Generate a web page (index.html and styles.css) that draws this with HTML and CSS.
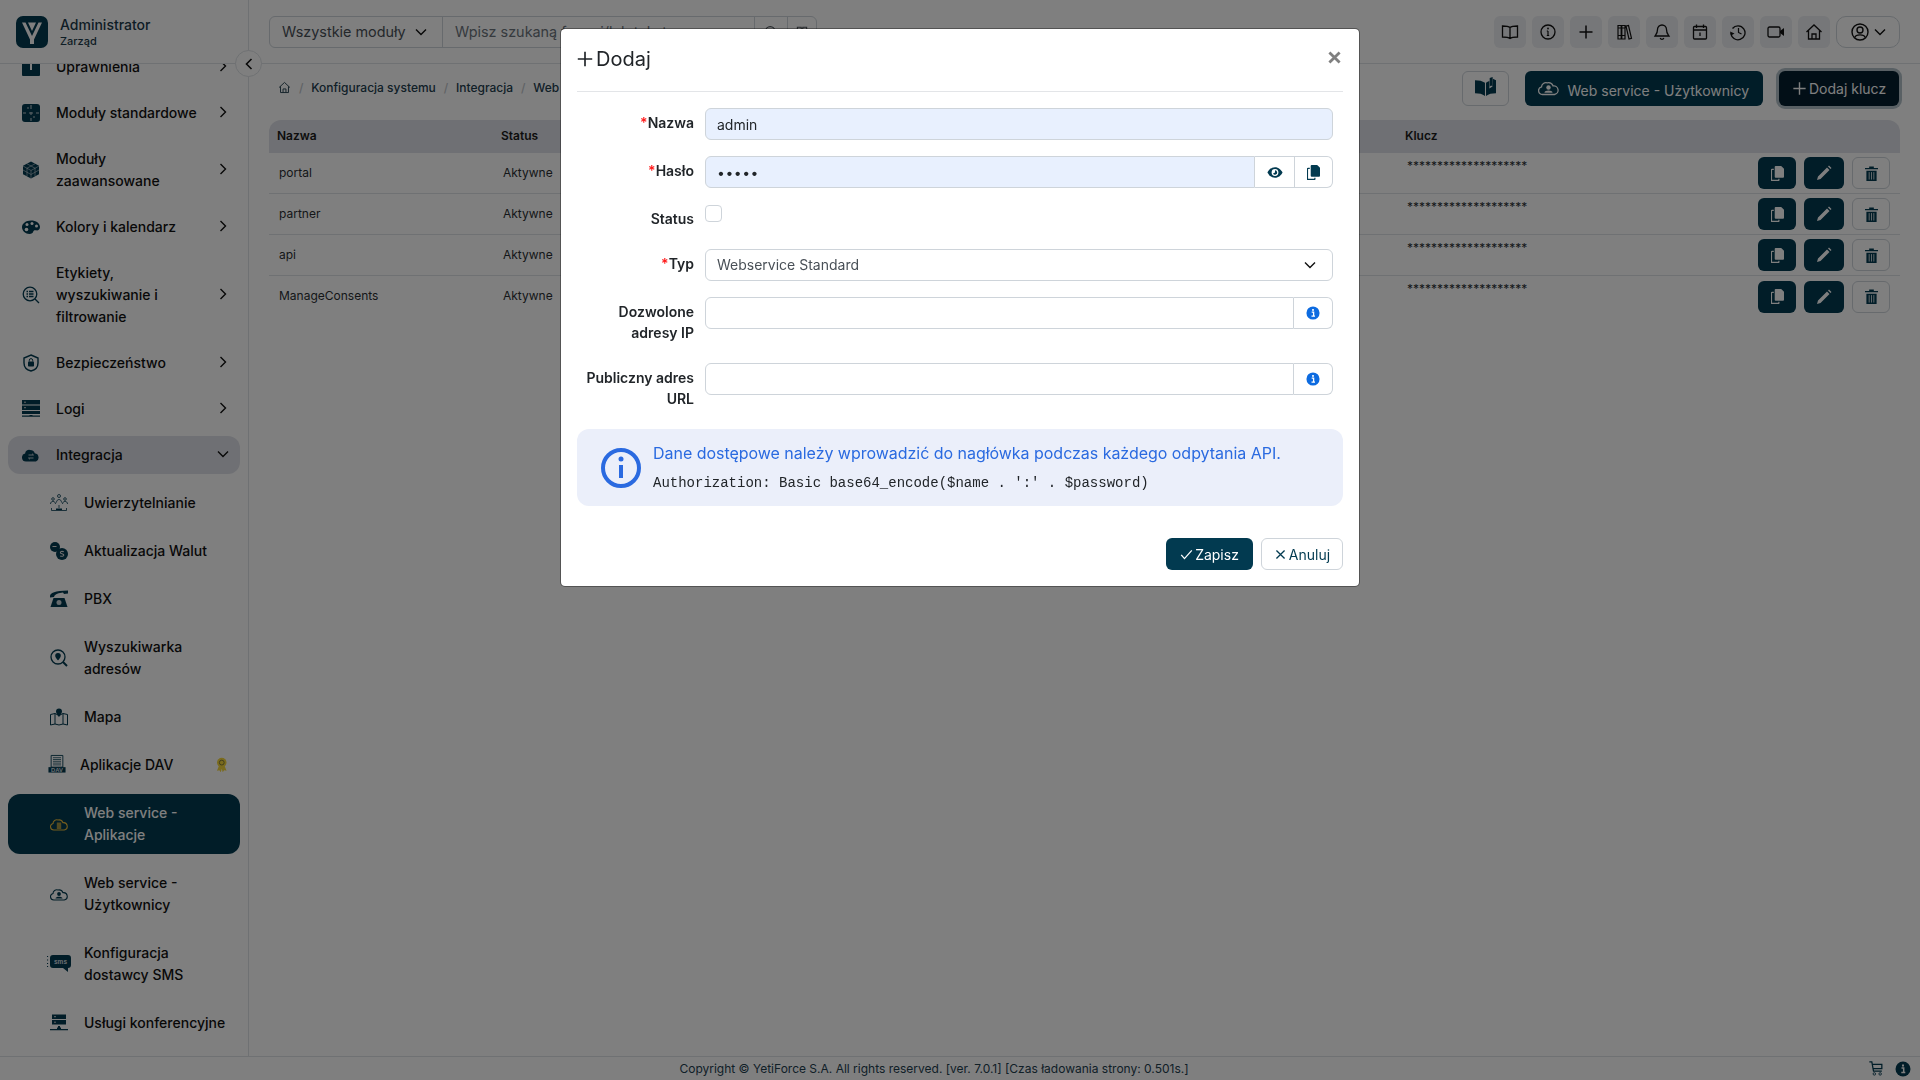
FILE: index.html
```html
<!DOCTYPE html>
<html lang="pl">
<head>
<title>Web service - Aplikacje</title>
<meta charset="utf-8">
<link rel="stylesheet" href="styles.css">
</head>
<body>

<svg class="sprite" xmlns="http://www.w3.org/2000/svg">
  <symbol id="i-chev-right" viewBox="0 0 12 12"><path d="M3.500 1l5 5-5 5" fill="none" stroke="currentColor" stroke-width="1.400"/></symbol>
  <symbol id="i-chev-down" viewBox="0 0 12 12"><path d="M1 3.500l5 5 5-5" fill="none" stroke="currentColor" stroke-width="1.400"/></symbol>
  <symbol id="i-chev-left" viewBox="0 0 12 12"><path d="M8.500 1l-5 5 5 5" fill="none" stroke="currentColor" stroke-width="1.600"/></symbol>
  <symbol id="i-perm" viewBox="0 0 18 18"><rect y="0" width="18" height="18" rx="1" fill="currentColor"/><path d="M8 6h2v6H8z" fill="#fff"/></symbol>
  <symbol id="i-puzzle" viewBox="0 0 18 18"><rect width="18" height="18" rx="3" fill="currentColor"/><path d="M9 1v4M9 8v3M9 14v3M1 9h3M7 9h4M14 9h3M5 4h2M11 13h2" stroke="#b9c6cd" stroke-width="1.100" fill="none"/></symbol>
  <symbol id="i-cube" viewBox="0 0 18 18"><path d="M9 .5l8 4.300v8.400l-8 4.300-8-4.300V4.800z" fill="currentColor"/><path d="M1 5l8 4.500L17 5M9 9.500V17M5 2.800l8 4.400M13 2.800L5 7.200M1 9l8 4.500L17 9M5 7v8M13 7v8" stroke="#c9d3d8" stroke-width=".6" fill="none"/></symbol>
  <symbol id="i-palette" viewBox="0 0 18 18"><path d="M9 2.500c5 0 9 2.700 9 6.500 0 2.500-2 3.800-4 3.300-1.700-.4-2.600.3-2.700 1.300C11 15.300 9.500 16 7.500 16 3.500 16 0 13 0 9.300 0 5.300 4 2.500 9 2.500z" fill="currentColor"/><circle cx="5" cy="6.500" r="1.500" fill="#fff"/><circle cx="10" cy="5.500" r="1.500" fill="#fff"/><circle cx="14.500" cy="8" r="1.500" fill="#fff"/><circle cx="4.500" cy="11.500" r="1.800" fill="#fff"/></symbol>
  <symbol id="i-search-list" viewBox="0 0 18 18"><circle cx="8" cy="8" r="6.800" fill="none" stroke="currentColor" stroke-width="1.300"/><path d="M4.500 5.500h1.500M7 5.500h4.500M4.500 8h1.500M7 8h4.500M4.500 10.500h1.500M7 10.500h4.500M13 13l4 4" stroke="currentColor" stroke-width="1.300" fill="none"/></symbol>
  <symbol id="i-shield" viewBox="0 0 18 18"><path d="M9 1l7 3v5c0 4-3 7-7 8-4-1-7-4-7-8V4z" fill="none" stroke="currentColor" stroke-width="1.400"/><rect x="6" y="7.500" width="6" height="5" rx=".8" fill="currentColor"/><path d="M7.300 7.500V6.300a1.700 1.700 0 013.400 0v1.200" fill="none" stroke="currentColor"/></symbol>
  <symbol id="i-logs" viewBox="0 0 18 18"><path d="M0 0h18v4.500H0zM0 5.500h18V10H0zM0 11h18v3H0zM0 15.500h7.500V15h3v.5H18v1.200H0z" fill="currentColor"/><path d="M2 2.200h2M2 7.700h2" stroke="#ccc" fill="none"/></symbol>
  <symbol id="i-cloud-sync" viewBox="0 0 18 18"><path d="M4 15.500a4 4 0 01-.9-7.900 4 4 0 015-3.600 5 5 0 014.700 3.300A4.300 4.300 0 0114 15.500z" fill="currentColor"/><path d="M6.500 9h5l-1.500-1.300M11.500 12h-5L8 13.300" stroke="#b9c6cd" fill="none"/></symbol>
  <symbol id="i-auth" viewBox="0 0 18 18"><g fill="none" stroke="currentColor" stroke-width=".8"><circle cx="9" cy="2" r="1.500"/><path d="M6.500 8.500c0-4 5-4 5 0"/><circle cx="3" cy="5" r="1.300"/><path d="M.5 10c0-3.500 5-3.500 5 0"/><circle cx="15" cy="5" r="1.300"/><path d="M12.500 10c0-3.500 5-3.500 5 0"/><path d="M1.500 14v2.500h15V14M9 11v3"/></g><path d="M6 14.500h6v1.500H6z" fill="currentColor"/></symbol>
  <symbol id="i-currency" viewBox="0 0 18 18"><circle cx="5" cy="5" r="5" fill="currentColor"/><circle cx="12" cy="12" r="6" fill="currentColor"/><path d="M2.500 4.500h4M13.800 9.800c-2-.9-3.600-.2-3.400 1 .2 1.200 3.400.8 3.400 2.300 0 1.200-1.800 1.600-3.600.8" stroke="#ddd" stroke-width="1.100" fill="none"/></symbol>
  <symbol id="i-phone" viewBox="0 0 18 18"><path d="M0 6.500C0 2.500 5 1 18 .5v3l-4 .5-1-1.500C9 3 5 3.500 4 7L0 7.500z" fill="currentColor"/><path d="M3.500 8h11l3 9H.5z" fill="currentColor"/><circle cx="9" cy="12.500" r="2.500" fill="#cbd5da"/></symbol>
  <symbol id="i-search-pin" viewBox="0 0 18 18"><circle cx="8" cy="8" r="7" fill="none" stroke="currentColor" stroke-width="1.300"/><path d="M8 4a2.800 2.800 0 012.800 2.800C10.800 8.600 8 11.500 8 11.500S5.200 8.600 5.200 6.800A2.800 2.800 0 018 4z" fill="currentColor"/><path d="M13 13l4 4" stroke="currentColor" stroke-width="2"/></symbol>
  <symbol id="i-map" viewBox="0 0 18 18"><path d="M.5 6.500L5 5.500l4 2 4-2 4.500 1V17L13 16l-4 1-4-1-4.500 1zM5 5.500V16M13 5.500V16" fill="none" stroke="currentColor"/><path d="M9 .5a3 3 0 013 3C12 5.500 9 9 9 9S6 5.500 6 3.500a3 3 0 013-3z" fill="currentColor"/></symbol>
  <symbol id="i-dav" viewBox="0 0 20 20"><path d="M3.500.500h13v13h-13z" fill="none" stroke="currentColor"/><path d="M5.500 3h9M5.500 5h9M5.500 7h9M5.500 9h9M5.500 11h9" stroke="currentColor" stroke-width=".8"/><rect x=".5" y="13.500" width="19" height="6" fill="currentColor"/><text x="10" y="18.500" class="icon-text" text-anchor="middle">DAV</text></symbol>
  <symbol id="i-cloud-doc" viewBox="0 0 18 18"><path d="M3.800 15A3.300 3.300 0 013 8.500a3.800 3.800 0 015-3.500 4.500 4.500 0 015 2.700A3.700 3.700 0 0114.200 15z" fill="none" stroke="currentColor" stroke-width="1.100"/><path d="M6.800 7.500h4.400v6.500H6.800z" fill="currentColor" opacity=".7"/></symbol>
  <symbol id="i-cloud-user" viewBox="0 0 18 18"><path d="M3.800 15A3.300 3.300 0 013 8.500a3.800 3.800 0 015-3.500 4.500 4.500 0 015 2.700A3.700 3.700 0 0114.200 15z" fill="none" stroke="currentColor" stroke-width="1.100"/><circle cx="9" cy="9" r="1.900" fill="currentColor"/><path d="M5.500 13.500c0-2.500 7-2.500 7 0z" fill="currentColor"/></symbol>
  <symbol id="i-sms" viewBox="0 0 24 20"><path d="M6 2h15a3 3 0 013 3v7a3 3 0 01-3 3v4l-5-4H6a3 3 0 01-3-3V5a3 3 0 013-3z" fill="currentColor" transform="translate(0 -1)"/><text x="13.500" y="10" class="icon-text" text-anchor="middle">sms</text><path d="M.5 2v1M.5 5.500v1M.5 9v1M.5 12v1" stroke="currentColor" stroke-width="1.200"/></symbol>
  <symbol id="i-server" viewBox="0 0 18 18"><path d="M2 .5h14v4.500H2zM2 6h14v4.500H2zM0 15h7v-1.500H8V12h2v1.500h1V15h7v1.300H0z" fill="currentColor"/><path d="M4 2.700h2M4 8.200h2" stroke="#ccc" fill="none"/></symbol>
  <symbol id="i-award" viewBox="0 0 12 16"><path d="M3 9l-2 5 2.500-.5L5 15.500 6 12l1 3.500 1.500-2L11 14 9 9z" fill="currentColor"/><circle cx="6" cy="5.500" r="5" fill="currentColor"/><circle cx="6" cy="5.500" r="2.500" fill="none" stroke="#7f7a3a"/></symbol>

  <symbol id="i-book" viewBox="0 0 18 18"><path d="M9 4.500C7.500 3.200 5 3 1.500 3v11C5 14 7.500 14.200 9 15.500 10.500 14.200 13 14 16.500 14V3C13 3 10.500 3.200 9 4.500zM9 4.500v11" fill="none" stroke="currentColor" stroke-width="1.300"/></symbol>
  <symbol id="i-info-line" viewBox="0 0 18 18"><circle cx="9" cy="9" r="7" fill="none" stroke="currentColor" stroke-width="1.300"/><path d="M9 8v4.500M7.800 8H9M7.800 12.500h2.400" stroke="currentColor" stroke-width="1.200" fill="none"/><circle cx="9" cy="5.500" r=".9" fill="currentColor"/></symbol>
  <symbol id="i-plus" viewBox="0 0 18 18"><path d="M9 2.500v13M2.500 9h13" stroke="currentColor" stroke-width="1.500" fill="none"/></symbol>
  <symbol id="i-books" viewBox="0 0 18 18"><path d="M3 2.500h3.200v13.500H3zM6.800 2.500H10v13.500H6.800zM11 3.200l2.500-.7 3 12.800-2.500.7z" fill="none" stroke="currentColor" stroke-width="1.200"/><path d="M3 5h7M3 12.500h7" stroke="currentColor" stroke-width="1.200" fill="none"/></symbol>
  <symbol id="i-bell" viewBox="0 0 18 18"><path d="M9 2a4.500 4.500 0 014.500 4.500c0 4 1.500 5 2.500 6.500H2c1-1.500 2.500-2.500 2.500-6.500A4.500 4.500 0 019 2zM7.200 15a1.900 1.900 0 003.600 0" fill="none" stroke="currentColor" stroke-width="1.300"/></symbol>
  <symbol id="i-calendar" viewBox="0 0 18 18"><rect x="2.500" y="3.500" width="13" height="12.500" rx="1" fill="none" stroke="currentColor" stroke-width="1.300"/><path d="M2.500 7h13M5.500 1.500v3.500M12.500 1.500v3.500M9 9.500v3.500" stroke="currentColor" stroke-width="1.300" fill="none"/></symbol>
  <symbol id="i-history" viewBox="0 0 18 18"><path d="M3.500 5.500A7 7 0 112 10" fill="none" stroke="currentColor" stroke-width="1.300"/><path d="M1 8.500l1 4 3.500-2z" fill="currentColor"/><path d="M9.500 5v4.500l3 1.500" fill="none" stroke="currentColor" stroke-width="1.200"/></symbol>
  <symbol id="i-video" viewBox="0 0 18 18"><rect x="1" y="4" width="12" height="10" rx="1.500" fill="none" stroke="currentColor" stroke-width="1.300"/><path d="M13 8l4-3v8l-4-3z" fill="currentColor"/></symbol>
  <symbol id="i-home" viewBox="0 0 18 18"><path d="M1.500 9L9 2l7.500 7M3.500 7.500V16h11V7.500M7 16v-5h4v5" fill="none" stroke="currentColor" stroke-width="1.300"/></symbol>
  <symbol id="i-user" viewBox="0 0 18 18"><circle cx="9" cy="9" r="8" fill="none" stroke="currentColor" stroke-width="1.400"/><circle cx="9" cy="7" r="3" fill="none" stroke="currentColor" stroke-width="1.400"/><path d="M3.800 14.500c1-3.500 9.400-3.500 10.400 0" fill="none" stroke="currentColor" stroke-width="1.400"/></symbol>
  <symbol id="i-reader" viewBox="0 0 20 18"><path d="M0 3c4 0 7 .7 9.500 2.500V18C7 16.200 4 15.500 0 15.500z" fill="currentColor"/><path d="M20 3v12.500c-4 0-7 .7-9.500 2.500V5.500c1-.7 2-1.300 3.200-1.700V11l3-2 .3-7.500" fill="currentColor"/><path d="M14 1l2.800-1v9l-1.400-1-1.400 1z" fill="currentColor"/></symbol>
  <symbol id="i-copy" viewBox="0 0 14 16"><path d="M5 0h6l3 3v8.500a1 1 0 01-1 1H5a1 1 0 01-1-1V1a1 1 0 011-1z" fill="currentColor"/><path d="M3 3.500H1a.5.5 0 00-.5.5v11a.5.5 0 00.5.5h7a.5.5 0 00.5-.5v-1.300" fill="none" stroke="currentColor" stroke-width="1.300"/></symbol>
  <symbol id="i-pencil" viewBox="0 0 16 16"><path d="M1 15l1-3.500L11 2.500 13.500 5l-9 9zM12 1.500l1-1L15.500 3l-1 1z" fill="currentColor"/></symbol>
  <symbol id="i-trash" viewBox="0 0 14 16"><path d="M0 2h4.500V.5h5V2H14v1.500H0zM1.500 5H12.500V16H1.500z" fill="currentColor"/><path d="M4.500 6.500V14.500M7 6.500V14.500M9.500 6.500V14.500" stroke="#cfd8dc" fill="none"/></symbol>
  <symbol id="i-eye" viewBox="0 0 18 14"><path d="M9 1c4 0 7 3 8.500 6-1.500 3-4.500 6-8.500 6S2 10 .5 7C2 4 5 1 9 1z" fill="currentColor"/><circle cx="9" cy="7" r="3.800" fill="#fff"/><path d="M9 4.500A2.500 2.500 0 116.800 8.200 L9 7z" fill="currentColor"/></symbol>
  <symbol id="i-info-solid" viewBox="0 0 16 16"><circle cx="8" cy="8" r="7.500" fill="currentColor"/><path d="M6.500 7h2.200v4M6.300 11.500h4" stroke="#fff" stroke-width="1.500" fill="none"/><rect x="7" y="3.500" width="2" height="2" fill="#fff"/></symbol>
  <symbol id="i-check" viewBox="0 0 16 16"><path d="M1.500 8.500l4 4.500 9-10" fill="none" stroke="currentColor" stroke-width="1.600"/></symbol>
  <symbol id="i-cross" viewBox="0 0 16 16"><path d="M3 3l10 10M13 3L3 13" fill="none" stroke="currentColor" stroke-width="1.600"/></symbol>
  <symbol id="i-close" viewBox="0 0 14 14"><path d="M1.500 1.500l11 11M12.500 1.500l-11 11" fill="none" stroke="currentColor" stroke-width="3"/></symbol>
  <symbol id="i-cart" viewBox="0 0 16 18"><path d="M0 1h3l2 11h10M4 4h11v5H5" fill="none" stroke="currentColor" stroke-width="1.500"/><circle cx="6" cy="15.500" r="1.500" fill="none" stroke="currentColor"/><circle cx="13" cy="15.500" r="1.500" fill="none" stroke="currentColor"/></symbol>
  <symbol id="i-search" viewBox="0 0 18 18"><circle cx="8" cy="8" r="6" fill="none" stroke="currentColor" stroke-width="1.500"/><path d="M12.500 12.500l4 4" stroke="currentColor" stroke-width="1.500"/></symbol>
  <symbol id="i-grid" viewBox="0 0 18 18"><path d="M3 3h5v5H3zM10 3h5v5h-5zM3 10h5v5H3zM10 10h5v5h-5z" fill="none" stroke="currentColor" stroke-width="1.300"/></symbol>
  <symbol id="i-logo" viewBox="0 0 32 32"><rect width="32" height="32" rx="7" fill="currentColor"/><path d="M6 6.500h3.500L16 20l6.500-13.500H26l-8 17V28h-4v-4.500zM12 6.500h8l-4 8.500z" fill="#fff"/></symbol>
</svg>

<div class="layout">
  <aside class="sidebar">
    <div class="side-head">
      <svg class="logo"><use href="#i-logo"/></svg>
      <div class="side-user">
        <div class="side-name">Administrator</div>
        <div class="side-role">Zarząd</div>
      </div>
    </div>
    <nav class="nav">
      <ul class="nav-list">
        <li class="nav-item"><svg class="nav-icon"><use href="#i-perm"/></svg><span class="nav-label">Uprawnienia</span><svg class="chev"><use href="#i-chev-right"/></svg></li>
        <li class="nav-item"><svg class="nav-icon"><use href="#i-puzzle"/></svg><span class="nav-label">Moduły standardowe</span><svg class="chev"><use href="#i-chev-right"/></svg></li>
        <li class="nav-item"><svg class="nav-icon"><use href="#i-cube"/></svg><span class="nav-label">Moduły zaawansowane</span><svg class="chev"><use href="#i-chev-right"/></svg></li>
        <li class="nav-item"><svg class="nav-icon"><use href="#i-palette"/></svg><span class="nav-label">Kolory i kalendarz</span><svg class="chev"><use href="#i-chev-right"/></svg></li>
        <li class="nav-item"><svg class="nav-icon"><use href="#i-search-list"/></svg><span class="nav-label">Etykiety, wyszukiwanie i filtrowanie</span><svg class="chev"><use href="#i-chev-right"/></svg></li>
        <li class="nav-item"><svg class="nav-icon"><use href="#i-shield"/></svg><span class="nav-label">Bezpieczeństwo</span><svg class="chev"><use href="#i-chev-right"/></svg></li>
        <li class="nav-item"><svg class="nav-icon"><use href="#i-logs"/></svg><span class="nav-label">Logi</span><svg class="chev"><use href="#i-chev-right"/></svg></li>
        <li class="nav-item nav-item-open"><svg class="nav-icon"><use href="#i-cloud-sync"/></svg><span class="nav-label">Integracja</span><svg class="chev"><use href="#i-chev-down"/></svg></li>
      </ul>
      <ul class="sub-list">
        <li class="sub-item"><svg class="nav-icon"><use href="#i-auth"/></svg><span class="sub-label">Uwierzytelnianie</span></li>
        <li class="sub-item"><svg class="nav-icon"><use href="#i-currency"/></svg><span class="sub-label">Aktualizacja Walut</span></li>
        <li class="sub-item"><svg class="nav-icon"><use href="#i-phone"/></svg><span class="sub-label">PBX</span></li>
        <li class="sub-item"><svg class="nav-icon"><use href="#i-search-pin"/></svg><span class="sub-label">Wyszukiwarka adresów</span></li>
        <li class="sub-item"><svg class="nav-icon"><use href="#i-map"/></svg><span class="sub-label">Mapa</span></li>
        <li class="sub-item sub-item-dav"><svg class="nav-icon"><use href="#i-dav"/></svg><span class="sub-label">Aplikacje DAV</span><svg class="award"><use href="#i-award"/></svg></li>
        <li class="sub-item sub-item-active"><svg class="nav-icon"><use href="#i-cloud-doc"/></svg><span class="sub-label">Web service - Aplikacje</span></li>
        <li class="sub-item"><svg class="nav-icon"><use href="#i-cloud-user"/></svg><span class="sub-label">Web service - Użytkownicy</span></li>
        <li class="sub-item sub-item-sms"><svg class="nav-icon"><use href="#i-sms"/></svg><span class="sub-label">Konfiguracja dostawcy SMS</span></li>
        <li class="sub-item"><svg class="nav-icon"><use href="#i-server"/></svg><span class="sub-label">Usługi konferencyjne</span></li>
      </ul>
    </nav>
  </aside>
  <button class="side-toggle"><svg class="side-toggle-icon"><use href="#i-chev-left"/></svg></button>

  <main class="main">
    <header class="topbar">
      <div class="search">
        <div class="search-module">Wszystkie moduły <svg class="chev-small"><use href="#i-chev-down"/></svg></div>
        <div class="search-input">Wpisz szukaną frazę i/lub tekst</div>
        <div class="search-btn"><svg><use href="#i-search"/></svg></div>
        <div class="search-btn search-btn-last"><svg><use href="#i-grid"/></svg></div>
      </div>
      <div class="top-icons">
        <span class="top-icon"><svg><use href="#i-book"/></svg></span>
        <span class="top-icon"><svg><use href="#i-info-line"/></svg></span>
        <span class="top-icon"><svg><use href="#i-plus"/></svg></span>
        <span class="top-icon"><svg><use href="#i-books"/></svg></span>
        <span class="top-icon"><svg><use href="#i-bell"/></svg></span>
        <span class="top-icon"><svg><use href="#i-calendar"/></svg></span>
        <span class="top-icon"><svg><use href="#i-history"/></svg></span>
        <span class="top-icon"><svg><use href="#i-video"/></svg></span>
        <span class="top-icon"><svg><use href="#i-home"/></svg></span>
        <span class="top-user"><svg class="top-user-icon"><use href="#i-user"/></svg><svg class="chev-small"><use href="#i-chev-down"/></svg></span>
      </div>
    </header>

    <div class="content">
      <div class="actions">
        <ol class="crumbs">
          <li><svg class="crumb-home"><use href="#i-home"/></svg></li>
          <li class="crumb">Konfiguracja systemu</li>
          <li class="crumb">Integracja</li>
          <li class="crumb">Web service - Aplikacje</li>
        </ol>
        <button class="btn btn-outline btn-reader"><svg><use href="#i-reader"/></svg></button>
        <button class="btn btn-dark btn-users"><svg><use href="#i-cloud-user"/></svg>Web service - Użytkownicy</button>
        <button class="btn btn-focus"><svg><use href="#i-plus"/></svg>Dodaj klucz</button>
      </div>

      <table class="keys">
        <thead>
          <tr><th class="col-name">Nazwa</th><th class="col-status">Status</th><th class="col-key">Klucz</th><th></th></tr>
        </thead>
        <tbody>
          <tr>
            <td>portal</td><td>Aktywne</td><td class="stars">********************</td>
            <td class="row-cell"><div class="row-btns"><span class="mini mini-dark mini-copy"><svg><use href="#i-copy"/></svg></span><span class="mini mini-dark mini-edit"><svg><use href="#i-pencil"/></svg></span><span class="mini mini-line"><svg><use href="#i-trash"/></svg></span></div></td>
          </tr>
          <tr>
            <td>partner</td><td>Aktywne</td><td class="stars">********************</td>
            <td class="row-cell"><div class="row-btns"><span class="mini mini-dark mini-copy"><svg><use href="#i-copy"/></svg></span><span class="mini mini-dark mini-edit"><svg><use href="#i-pencil"/></svg></span><span class="mini mini-line"><svg><use href="#i-trash"/></svg></span></div></td>
          </tr>
          <tr>
            <td>api</td><td>Aktywne</td><td class="stars">********************</td>
            <td class="row-cell"><div class="row-btns"><span class="mini mini-dark mini-copy"><svg><use href="#i-copy"/></svg></span><span class="mini mini-dark mini-edit"><svg><use href="#i-pencil"/></svg></span><span class="mini mini-line"><svg><use href="#i-trash"/></svg></span></div></td>
          </tr>
          <tr>
            <td>ManageConsents</td><td>Aktywne</td><td class="stars">********************</td>
            <td class="row-cell"><div class="row-btns"><span class="mini mini-dark mini-copy"><svg><use href="#i-copy"/></svg></span><span class="mini mini-dark mini-edit"><svg><use href="#i-pencil"/></svg></span><span class="mini mini-line"><svg><use href="#i-trash"/></svg></span></div></td>
          </tr>
        </tbody>
      </table>
    </div>
  </main>
</div>

<footer class="footer">
  <div class="footer-text">Copyright © YetiForce S.A. All rights reserved. [ver. 7.0.1] [Czas ładowania strony: 0.501s.]</div>
  <div class="footer-icons"><svg class="foot-cart"><use href="#i-cart"/></svg><svg class="foot-info"><use href="#i-info-solid"/></svg></div>
</footer>

<div class="backdrop">
  <div class="modal">
    <div class="modal-head">
      <svg class="modal-plus"><use href="#i-plus"/></svg>
      <h5 class="modal-title">Dodaj</h5>
      <svg class="modal-close"><use href="#i-close"/></svg>
    </div>

    <form class="form">
      <label class="form-label"><span class="req">*</span>Nazwa</label>
      <div class="field field-filled">admin</div>

      <label class="form-label"><span class="req">*</span>Hasło</label>
      <div class="group">
        <div class="field field-filled field-pass">•••••</div>
        <span class="addon addon-eye"><svg class="eye"><use href="#i-eye"/></svg></span>
        <span class="addon addon-copy"><svg class="copy"><use href="#i-copy"/></svg></span>
      </div>

      <label class="form-label">Status</label>
      <div><span class="checkbox"></span></div>

      <label class="form-label"><span class="req">*</span>Typ</label>
      <div class="field field-select">Webservice Standard<svg class="select-chev"><use href="#i-chev-down"/></svg></div>

      <label class="form-label">Dozwolone adresy IP</label>
      <div class="group">
        <div class="field"></div>
        <span class="addon addon-info"><svg class="info"><use href="#i-info-solid"/></svg></span>
      </div>

      <label class="form-label">Publiczny adres URL</label>
      <div class="group">
        <div class="field"></div>
        <span class="addon addon-info"><svg class="info"><use href="#i-info-solid"/></svg></span>
      </div>
    </form>

    <div class="notice">
      <svg class="notice-icon" viewBox="0 0 40 40"><circle cx="20" cy="20" r="18" fill="none" stroke="currentColor" stroke-width="4"/><path d="M20 17v13" stroke="currentColor" stroke-width="4"/><circle cx="20" cy="11" r="2.500" fill="currentColor"/></svg>
      <div>
        <p class="notice-text">Dane dostępowe należy wprowadzić do nagłówka podczas każdego odpytania API.</p>
        <code class="notice-code">Authorization: Basic base64_encode($name . ':' . $password)</code>
      </div>
    </div>

    <div class="modal-foot">
      <button class="btn btn-save"><svg><use href="#i-check"/></svg>Zapisz</button>
      <button class="btn btn-cancel"><svg><use href="#i-cross"/></svg>Anuluj</button>
    </div>
  </div>
</div>

</body>
</html>
```

FILE: styles.css
```css
* {
    box-sizing: border-box;
}
html, body {
    height: 100%;
}
body {
    margin: 0;
    display: flex;
    flex-direction: column;
    overflow: hidden;
    font-family: Inter, "Liberation Sans", sans-serif;
    font-size: 14px;
    color: #212529;
    background: #fff;
}
ul, ol {
    list-style: none;
    margin: 0;
    padding: 0;
}
svg {
    display: block;
}
.sprite {
    display: none;
}
.icon-text {
    font-family: "Liberation Sans", sans-serif;
    font-size: 6.5px;
    font-weight: 700;
    fill: #d5dde1;
}

.layout {
    flex: 1;
    min-height: 0;
    display: flex;
    position: relative;
}

/* sidebar */
.sidebar {
    width: 249px;
    flex: none;
    display: flex;
    flex-direction: column;
    border-right: 1px solid #dee2e6;
}
.side-head {
    height: 64px;
    flex: none;
    display: flex;
    align-items: center;
    padding-left: 16px;
    gap: 12px;
    border-bottom: 1px solid #dee2e6;
}
.logo {
    width: 32px;
    height: 32px;
    color: #023a50;
}
.side-user {
    padding-top: 2px;
}
.side-name {
    font-size: 14px;
    font-weight: 500;
    line-height: 18px;
    color: #1c3b4b;
}
.side-role {
    font-size: 11px;
    line-height: 15px;
    font-weight: 500;
    color: #1c3b4b;
}
.nav {
    flex: 1;
    min-height: 0;
    overflow: hidden;
    padding: 0 8px;
    color: #111;
}
.nav-list {
    margin-top: -16px;
    display: flex;
    flex-direction: column;
    gap: 8px;
}
.nav-item, .sub-item {
    display: flex;
    align-items: center;
    line-height: 22px;
    border-radius: 12px;
    padding: 8px 11px 8px 14px;
    font-weight: 500;
    font-size: 14px;
}
.nav-icon {
    width: 18px;
    height: 18px;
    flex: none;
    margin-right: 16px;
    color: #023a50;
}
.nav-label {
    width: 145px;
}
.chev {
    width: 12px;
    height: 12px;
    margin-left: auto;
    margin-top: -3px;
}
.nav-item-open {
    background: #dfe1e8;
}
.sub-list {
    margin-top: 10px;
    display: flex;
    flex-direction: column;
    gap: 10px;
}
.sub-item {
    padding-left: 42px;
}
.sub-label {
    width: 142px;
}
.sub-item-dav {
    padding-left: 40px;
}
.sub-item-dav .nav-icon {
    margin-right: 14px;
    height: 20px;
    margin-top: -2px;
}
.sub-item-sms .nav-icon {
    width: 24px;
    height: 20px;
    margin-left: -3px;
    margin-right: 13px;
}
.award {
    width: 12px;
    height: 16px;
    margin-left: auto;
    color: #f5d63d;
    margin-right: 1px;
}
.sub-item-active {
    background: #023a50;
    color: #fff;
}
.sub-item-active .nav-icon {
    color: #e8b93c;
}
.side-toggle {
    position: absolute;
    left: 235px;
    top: 50px;
    width: 27px;
    height: 27px;
    padding: 0;
    border: 1px solid #dee2e6;
    border-radius: 50%;
    background: #fff;
    display: flex;
    align-items: center;
    justify-content: center;
    color: #111;
}
.side-toggle-icon {
    width: 12px;
    height: 12px;
}

/* top */
.main {
    flex: 1;
    min-width: 0;
    display: flex;
    flex-direction: column;
}
.topbar {
    height: 64px;
    flex: none;
    display: flex;
    align-items: center;
    justify-content: space-between;
    padding: 0 20px;
    border-bottom: 1px solid #dee2e6;
}
.search {
    display: flex;
    height: 32px;
    border: 1px solid #ced4da;
    border-radius: 6px;
    color: #495057;
}
.search-module {
    width: 173px;
    display: flex;
    align-items: center;
    justify-content: space-between;
    padding: 0 15px 0 12px;
    border-right: 1px solid #ced4da;
    font-size: 14.4px;
}
.search-input {
    width: 311px;
    padding: 0 12px;
    line-height: 30px;
    font-size: 14.4px;
    color: #6c757d;
}
.search-btn {
    width: 33px;
    border-left: 1px solid #ced4da;
    display: flex;
    align-items: center;
    justify-content: center;
}
.search-btn svg {
    width: 14px;
    height: 14px;
}
.search-btn-last {
    width: 29px;
}
.chev-small {
    width: 12px;
    height: 12px;
    color: #111;
}
.top-icons {
    display: flex;
    align-items: center;
    gap: 6px;
}
.top-icon {
    width: 32px;
    height: 32px;
    border-radius: 6px;
    background: #eceef2;
    display: flex;
    align-items: center;
    justify-content: center;
    color: #111;
}
.top-icon svg {
    width: 18px;
    height: 18px;
}
.top-user {
    width: 64px;
    height: 32px;
    border: 1px solid #ced4da;
    border-radius: 10px;
    display: flex;
    align-items: center;
    justify-content: center;
    gap: 5px;
    color: #111;
}
.top-user-icon {
    width: 18px;
    height: 18px;
}

/* content */
.content {
    padding: 7px 20px 0;
}
.actions {
    display: flex;
    align-items: center;
    gap: 16px;
    height: 35px;
    padding-right: 1px;
}
.crumbs {
    display: flex;
    align-items: center;
    flex: 1;
    font-size: 12px;
    font-weight: 500;
    color: #23404f;
    padding-left: 9px;
    padding-bottom: 2px;
}
.crumb-home {
    width: 13px;
    height: 13px;
}
.crumb::before {
    content: "/";
    color: #bfc5ca;
    padding: 0 7.9px;
}
.btn {
    height: 35px;
    border: 1px solid transparent;
    border-radius: 6px;
    font-family: inherit;
    font-size: 14px;
    display: flex;
    align-items: center;
    padding: 0 12px;
    background: none;
    color: #fff;
    white-space: nowrap;
}
.btn svg {
    flex: none;
}
.btn-outline {
    width: 47px;
    justify-content: center;
    border-color: #ced4da;
    color: #023a50;
}
.btn-reader svg {
    width: 21px;
    height: 19px;
    margin-top: -4px;
}
.btn-dark {
    background: #023a50;
}
.btn-users {
    width: 238px;
    padding-top: 3px;
}
.btn-users svg {
    width: 21px;
    height: 21px;
    margin-right: 8.5px;
    margin-top: -5px;
}
.btn-focus {
    width: 120px;
    background: #041e2e;
    box-shadow: 0 0 0 3px #b3c1c9;
    padding: 0 11px;
}
.btn-focus svg {
    width: 17px;
    height: 17px;
    margin-right: 1px;
}

/* table */
.keys {
    width: 100%;
    margin-top: 14px;
    border-collapse: separate;
    border-spacing: 0;
    table-layout: fixed;
    font-size: 12px;
}
.keys th {
    height: 33px;
    text-align: left;
    font-weight: 600;
    padding: 0 8px 2px;
    background: #dfe1e8;
    color: #1a1a1a;
}
.keys th:first-child {
    border-top-left-radius: 12px;
}
.keys th:last-child {
    border-top-right-radius: 12px;
}
.col-name {
    width: 224px;
}
.col-status {
    width: 904px;
}
.col-key {
    width: 353px;
}
.keys td {
    height: 41px;
    padding: 0 10px 2px;
    border-bottom: 1px solid #dee2e6;
    color: #2b2f33;
}
.keys tr:last-child td {
    border-bottom: 0;
}
.keys .stars {
    vertical-align: top;
    padding-top: 5px;
    line-height: 15px;
    letter-spacing: 0;
}
.keys .row-cell {
    padding: 0 10px 0 0;
}
.row-btns {
    display: flex;
    justify-content: flex-end;
    gap: 8px;
}
.mini {
    height: 32px;
    border-radius: 6px;
    display: flex;
    align-items: center;
    justify-content: center;
}
.mini-dark {
    background: #023a50;
    color: #fff;
}
.mini-copy {
    width: 38px;
}
.mini-edit {
    width: 40px;
}
.mini-line {
    width: 38px;
    border: 1px solid #ced4da;
    color: #023a50;
}
.mini svg {
    width: 13px;
    height: 15px;
}
.mini-edit svg {
    width: 16px;
    height: 16px;
}

/* footer */
.footer {
    height: 24px;
    flex: none;
    display: flex;
    align-items: center;
    border-top: 1px solid #dee2e6;
    font-size: 12px;
    color: #23404f;
}
.footer-text {
    flex: 1;
    text-align: center;
}
.footer-icons {
    width: 52px;
    display: flex;
    align-items: center;
    gap: 12px;
    padding-left: 1px;
}
.foot-cart {
    width: 14px;
    height: 15px;
    color: #023a50;
}
.foot-info {
    width: 16px;
    height: 16px;
    color: #023a50;
}

/* modal */
.backdrop {
    position: fixed;
    top: 0;
    right: 0;
    bottom: 0;
    left: 0;
    background: rgba(0, 0, 0, 0.5);
}
.modal {
    width: 800px;
    margin: 28px auto 0;
    padding: 0 16px 16px;
    background: #fff;
    background-clip: padding-box;
    border: 1px solid rgba(0, 0, 0, 0.35);
    border-radius: 5px;
}
.modal-head {
    height: 63px;
    display: flex;
    align-items: center;
    border-bottom: 1px solid #e3e5e8;
    padding-bottom: 2px;
}
.modal-plus {
    width: 20px;
    height: 20px;
    margin-left: -2px;
    margin-right: 1px;
    color: #212529;
}
.modal-title {
    margin: 0;
    font-size: 20px;
    font-weight: 400;
}
.modal-close {
    width: 13px;
    height: 13px;
    margin-left: auto;
    margin-right: 2px;
    margin-top: -3px;
    color: #808080;
}
.form {
    margin-top: 16px;
    padding-right: 10px;
    display: grid;
    grid-template-columns: 117px 628px;
    column-gap: 11px;
    row-gap: 16px;
    align-items: start;
}
.form-label {
    text-align: right;
    font-weight: 600;
    line-height: 21px;
    padding: 4px 0;
}
.req {
    color: #ff1a1a;
}
.field {
    flex: 1;
    height: 32px;
    border: 1px solid #ced4da;
    border-radius: 6px;
    padding: 0 11px;
    line-height: 31px;
    background: #fff;
}
.field-filled {
    background: #e8f0fe;
}
.field-pass {
    font-size: 14px;
    letter-spacing: 0.5px;
}
.field-select {
    color: #495057;
    display: flex;
    justify-content: space-between;
    align-items: center;
    padding-bottom: 1px;
}
.select-chev {
    width: 12px;
    height: 12px;
    margin-right: 5px;
    color: #111;
}
.checkbox {
    display: block;
    width: 17px;
    height: 17px;
    margin-top: 1px;
    border: 1px solid #ced4da;
    border-radius: 4px;
    background: #fff;
}
.group {
    display: flex;
}
.group .field {
    border-radius: 6px 0 0 6px;
}
.addon {
    height: 32px;
    display: flex;
    align-items: center;
    justify-content: center;
    border: 1px solid #ced4da;
    border-left: 0;
}
.addon:last-child {
    border-radius: 0 6px 6px 0;
}
.addon-eye {
    width: 40px;
    color: #023a50;
}
.addon-copy {
    width: 38px;
    color: #023a50;
}
.addon-info {
    width: 39px;
    color: #0d6be0;
}
.eye {
    width: 16px;
    height: 13px;
}
.copy {
    width: 13px;
    height: 15px;
}
.info {
    width: 14px;
    height: 14px;
}
.notice {
    margin-top: 16px;
    height: 77px;
    display: flex;
    align-items: center;
    gap: 12px;
    padding: 0 24px;
    background: #ebeffa;
    border-radius: 12px;
}
.notice-icon {
    width: 40px;
    height: 40px;
    flex: none;
    color: #2a6ae0;
}
.notice-text {
    margin: 0 0 8px;
    font-size: 16px;
    line-height: 24px;
    letter-spacing: -0.03px;
    color: #2a6ae0;
}
.notice-code {
    display: block;
    font-family: "Liberation Mono", monospace;
    font-size: 14px;
    line-height: 21px;
    color: #212529;
}
.modal-foot {
    margin-top: 32px;
    display: flex;
    justify-content: flex-end;
    gap: 8px;
}
.btn-save, .btn-cancel {
    height: 32px;
    justify-content: center;
    padding: 0;
    gap: 2px;
}
.btn-save {
    width: 87px;
    background: #023a50;
}
.btn-cancel {
    width: 82px;
    border-color: #ced4da;
    color: #023a50;
}
.btn-save svg, .btn-cancel svg {
    width: 13px;
    height: 13px;
}
```
